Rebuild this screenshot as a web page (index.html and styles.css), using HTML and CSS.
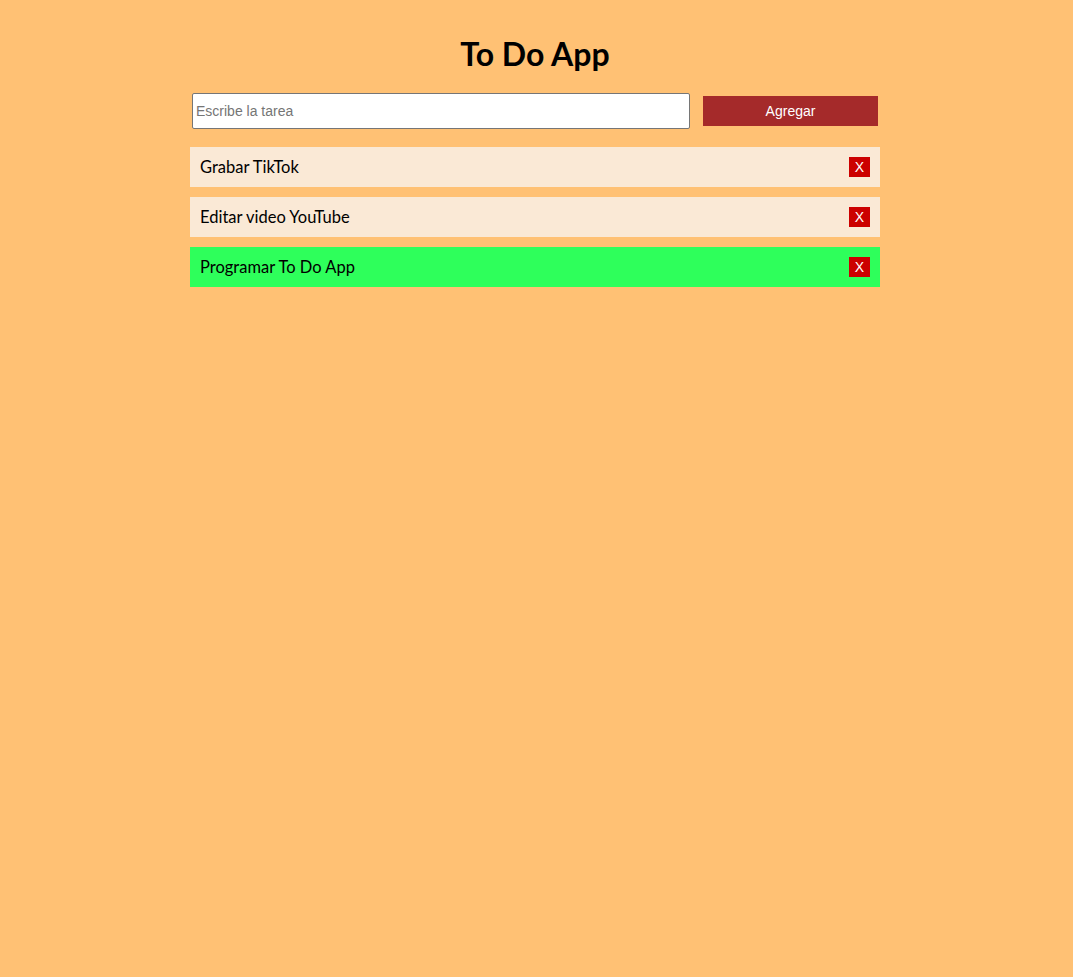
FILE: index.html
```html
<!DOCTYPE html>
<html lang="es">
<head>
<meta charset="utf-8">
<title>To Do App</title>
<link rel="stylesheet" href="styles.css">
</head>
<body>
<main class="app">
  <h1 class="title">To Do App</h1>
  <form class="form">
    <input class="input" type="text" placeholder="Escribe la tarea">
    <button class="add" type="button">Agregar</button>
  </form>
  <ul class="list">
    <li class="item"><span class="text">Grabar TikTok</span><button class="del" type="button">X</button></li>
    <li class="item"><span class="text">Editar video YouTube</span><button class="del" type="button">X</button></li>
    <li class="item done"><span class="text">Programar To Do App</span><button class="del" type="button">X</button></li>
  </ul>
</main>
</body>
</html>
```
FILE: styles.css
```css
html, body {
  margin: 0;
  padding: 0;
  background: #ffc174;
  min-height: 100%;
}
body {
  font-family: "Lato", "Noto Sans", sans-serif;
  color: #000;
}
.app {
  width: 690px;
  margin: 0 auto;
  padding: 34px 3px 0 0;
}
.title {
  margin: 0 0 19px;
  text-align: center;
  font-size: 32px;
  font-weight: 700;
  line-height: 40px;
}
.form {
  display: flex;
  align-items: center;
  padding: 0 2px;
  margin-bottom: 18px;
}
.input {
  width: 498px;
  height: 36px;
  box-sizing: border-box;
  border: 1px solid #767676;
  border-radius: 2px;
  padding: 0 3px;
  font-family: "Liberation Sans", Arial, sans-serif;
  font-size: 14px;
  background: #fff;
}
.input::placeholder { color: #757575; }
.add {
  margin-left: auto;
  width: 175px;
  height: 30px;
  border: none;
  background: #a52a2a;
  color: #fff;
  font-family: "Liberation Sans", Arial, sans-serif;
  font-size: 14px;
  padding: 0;
}
.list {
  list-style: none;
  margin: 0;
  padding: 0;
  display: flex;
  flex-direction: column;
  gap: 10px;
}
.item {
  display: flex;
  align-items: center;
  justify-content: space-between;
  height: 40px;
  padding: 0 10px;
  background: #fae9d6;
  font-size: 16.5px;
}
.item.done { background: #2eff5b; }
.del {
  width: 21px;
  height: 20px;
  border: none;
  padding: 0;
  background: #cc0000;
  color: #fff;
  font-family: "Liberation Sans", Arial, sans-serif;
  font-size: 14px;
  line-height: 20px;
}
```
